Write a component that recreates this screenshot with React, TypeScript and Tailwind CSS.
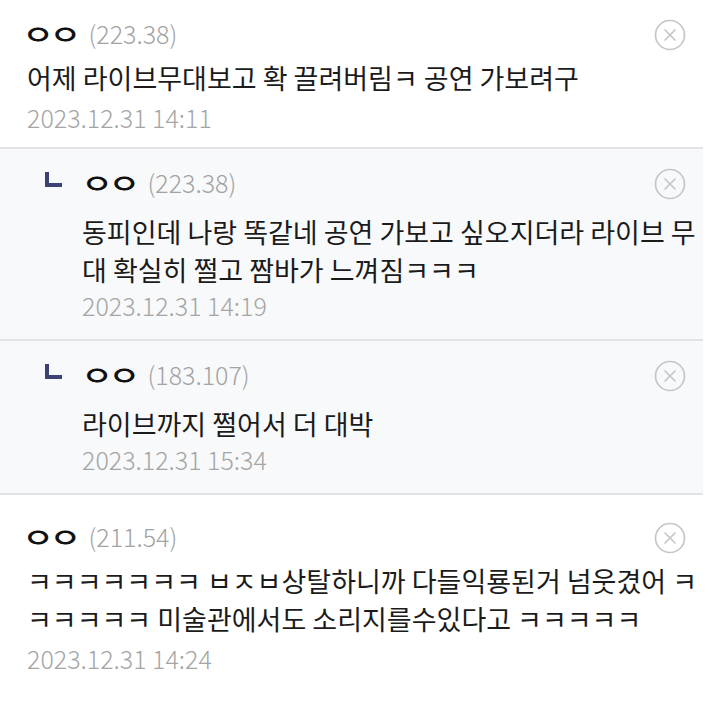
import React from 'react';

type Comment = {
  id: number;
  name: string;
  ip: string;
  body: string;
  date: string;
  reply?: boolean;
};

const comments: Comment[] = [
  { id: 1, name: 'ㅇㅇ', ip: '(223.38)', body: '어제 라이브무대보고 확 끌려버림ㅋ 공연 가보려구', date: '2023.12.31 14:11' },
  {
    id: 2,
    name: 'ㅇㅇ',
    ip: '(223.38)',
    body: '동피인데 나랑 똑같네 공연 가보고 싶오지더라 라이브 무대 확실히 쩔고 짬바가 느껴짐ㅋㅋㅋ',
    date: '2023.12.31 14:19',
    reply: true,
  },
  { id: 3, name: 'ㅇㅇ', ip: '(183.107)', body: '라이브까지 쩔어서 더 대박', date: '2023.12.31 15:34', reply: true },
  {
    id: 4,
    name: 'ㅇㅇ',
    ip: '(211.54)',
    body: 'ㅋㅋㅋㅋㅋㅋㅋ ㅂㅈㅂ상탈하니까 다들익룡된거 넘웃겼어 ㅋㅋㅋㅋㅋㅋ 미술관에서도 소리지를수있다고 ㅋㅋㅋㅋㅋ',
    date: '2023.12.31 14:24',
  },
];

const font = "font-['Noto_Sans_CJK_KR','Noto_Sans',sans-serif]";

function DeleteIcon() {
  return (
    <svg width="32" height="32" viewBox="0 0 32 32" fill="none" className="shrink-0 mt-[3px]">
      <circle cx="16" cy="16" r="14.5" stroke="#c6c6c6" strokeWidth="1.7" />
      <path d="M11 11L21 21M21 11L11 21" stroke="#c6c6c6" strokeWidth="1.7" strokeLinecap="round" />
    </svg>
  );
}

function CommentItem({ c, last }: { c: Comment; last: boolean }) {
  let pad = 'bg-white pl-[27px] pt-[16px] pb-[13px] border-b-2 border-[#e2e3e6] ';
  if (c.reply) pad = 'bg-[#f8f9fa] pl-[45px] pt-[16px] pb-[17px] border-b-2 border-[#e2e3e6] ';
  if (last) pad = 'bg-white pl-[27px] pt-[24px] pb-[11px] ';

  return (
    <div className={pad + 'pr-[17px]'}>
      <div className="flex items-start justify-between">
        <div className="flex items-center h-[34px]">
          {c.reply && (
            <span className="block w-[17px] h-[15px] border-l-[4px] border-b-[4px] border-[#3d4276] mr-[24px] -mt-[6px]" />
          )}
          <span
            className={`${font} inline-block scale-y-[0.78] text-[35px] font-medium text-[#111] leading-[34px] tracking-[-5px] -ml-[5px]`}
          >
            {c.name}
          </span>
          <span className={`${font} text-[25px] font-light text-[#a3a3a3] leading-[34px] ml-[12px]`}>{c.ip}</span>
        </div>
        <DeleteIcon />
      </div>
      <div className={c.reply ? 'pl-[37px]' : ''}>
        <p
          className={`${font} text-[27px] text-[#1b1b1b] leading-[38px] break-all -mr-[13px] ${
            c.reply ? 'mt-[13px]' : 'mt-[8px]'
          }`}
        >
          {c.body}
        </p>
        <p
          className={`${font} text-[25px] font-light text-[#a5a5a5] leading-[34px] ${
            c.reply ? '-mt-[1px]' : 'mt-[3px]'
          }`}
        >
          {c.date}
        </p>
      </div>
    </div>
  );
}

export default function App() {
  return (
    <div className="w-[712px] h-[715px] bg-white overflow-hidden">
      <div className="w-[703px]">
        {comments.map((c, i) => (
          <CommentItem key={c.id} c={c} last={i === comments.length - 1} />
        ))}
      </div>
    </div>
  );
}
